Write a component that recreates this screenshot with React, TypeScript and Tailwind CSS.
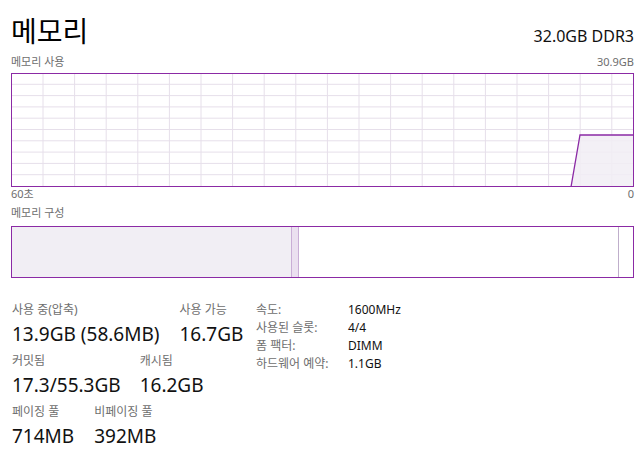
import React from "react";

const font = { fontFamily: '"Noto Sans", "Noto Sans CJK KR", sans-serif' };

const vLines = Array.from({ length: 19 }, (_, i) => 31 + i * 31.6);
const hLines = Array.from({ length: 9 }, (_, i) => 10.3 + i * 11.3);

function UsageGraph() {
  return (
    <div className="h-[114px] w-[623px] border border-[#8b2aa5]">
      <svg width="621" height="112" className="block">
        {vLines.map((x) => (
          <line key={"v" + x} x1={x} y1={0} x2={x} y2={112} stroke="#e6dfea" strokeWidth="1" />
        ))}
        {hLines.map((y) => (
          <line key={"h" + y} x1={0} y1={y} x2={621} y2={y} stroke="#e6dfea" strokeWidth="1" />
        ))}
        <polygon points="559,113 568,61 622,61 622,113" fill="#f1edf4" fillOpacity="0.85" />
        <polyline points="559,113 568,61 622,61" fill="none" stroke="#8b2aa5" strokeWidth="1.3" />
      </svg>
    </div>
  );
}

function Composition() {
  return (
    <div className="flex h-[52px] w-[623px] border border-[#8b2aa5]">
      <div className="w-[280px] border-r border-[#c9aed6] bg-[#f1eef4]" />
      <div className="w-[7px] border-r border-[#c9aed6] bg-[#ebe0f0]" />
      <div className="w-[320px] border-r border-[#bfaecb]" />
      <div className="flex-1" />
    </div>
  );
}

function Stat({ label, value }: { label: string; value: string }) {
  return (
    <div className="flex flex-col">
      <div className="h-[16px] text-[12px] leading-[16px] text-[#6e6e6e]">{label}</div>
      <div className="mt-[4px] h-[24px] text-[19px] leading-[24px] text-[#111]">{value}</div>
    </div>
  );
}

const specs = [
  ["속도:", "1600MHz"],
  ["사용된 슬롯:", "4/4"],
  ["폼 팩터:", "DIMM"],
  ["하드웨어 예약:", "1.1GB"],
];

export default function App() {
  return (
    <div className="h-[456px] w-[638px] overflow-hidden bg-white pl-[11px]" style={font}>
      <div className="flex h-[55px] w-[623px] items-baseline justify-between pt-[14px]">
        <div className="text-[28px] leading-[34px] text-black">메모리</div>
        <div className="text-[16px] leading-[22px] text-[#111]">32.0GB DDR3</div>
      </div>
      <div className="flex h-[18px] w-[623px] items-start justify-between text-[11px] leading-[14px] text-[#6e6e6e]">
        <span>메모리 사용</span>
        <span>30.9GB</span>
      </div>
      <UsageGraph />
      <div className="flex h-[19px] w-[623px] justify-between text-[11px] leading-[14px] text-[#6e6e6e]">
        <span>60초</span>
        <span>0</span>
      </div>
      <div className="h-[20px] text-[11px] leading-[14px] text-[#6e6e6e]">메모리 구성</div>
      <Composition />
      <div className="mt-[24px] flex items-start">
        <div className="flex w-[245px] flex-col gap-[7px] pl-[1px]">
          <div className="flex gap-[20px]">
            <Stat label="사용 중(압축)" value="13.9GB (58.6MB)" />
            <Stat label="사용 가능" value="16.7GB" />
          </div>
          <div className="flex gap-[19px]">
            <Stat label="커밋됨" value="17.3/55.3GB" />
            <Stat label="캐시됨" value="16.2GB" />
          </div>
          <div className="flex gap-[20px]">
            <Stat label="페이징 풀" value="714MB" />
            <Stat label="비페이징 풀" value="392MB" />
          </div>
        </div>
        <div className="-mt-[1px] grid grid-cols-[92px_auto] text-[12px] leading-[18px]">
          {specs.map(([k, v]) => (
            <React.Fragment key={k}>
              <span className="text-[#6e6e6e]">{k}</span>
              <span className="text-[#111]">{v}</span>
            </React.Fragment>
          ))}
        </div>
      </div>
    </div>
  );
}
